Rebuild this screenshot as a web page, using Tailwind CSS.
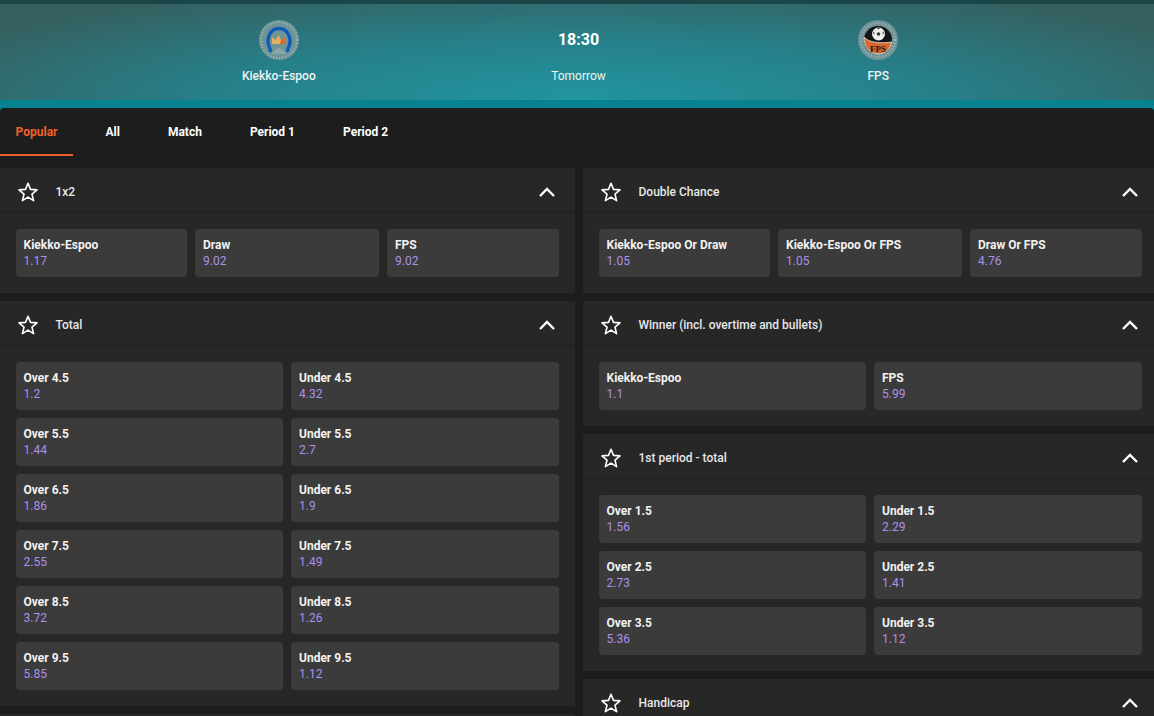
<!DOCTYPE html>
<html lang="en">
<head>
  <meta charset="UTF-8" />
  <title>Kiekko-Espoo - FPS</title>
  <script src="https://cdn.jsdelivr.net/npm/@tailwindcss/browser@4"></script>
</head>
<body class="m-0 h-[716px] w-[1154px] overflow-hidden bg-[#1d1d1d] font-['Roboto',sans-serif] text-white">

  <!-- Match header -->
  <header class="h-[116px] bg-[#06838f] pt-[4px] [background-image:linear-gradient(#1b4649_4px,transparent_4px)]">
    <div class="grid h-[96px] grid-cols-3 pr-[126px] pl-[129px] bg-[radial-gradient(ellipse_62%_125%_at_50%_100%,#21959f_0%,#26808a_50%,#35605f_100%)]">
      <div class="flex flex-col items-center">
        <svg class="mt-[16px] h-10 w-10" viewBox="0 0 40 40">
          <circle cx="20" cy="20" r="20" fill="#6f9497"/>
          <circle cx="20" cy="20" r="18" fill="none" stroke="#a3baba" stroke-width="2" stroke-dasharray="1 2"/>
          <path d="M20 27 L28 34 H12 Z" fill="#8aa6a8"/>
          <path d="M11 32 C12 30 11.5 29 10.5 27.5 C6.5 19 11 8.5 20 8.5 C29 8.5 33.5 19 29.5 27.5 C28.5 29 28 30 29 32" fill="none" stroke="#0f5cb8" stroke-width="3.4"/>
          <path d="M13 24 L13 17 L16.5 20 L19.5 15 L22 20 L26.5 17 L26 24 Z" fill="#e2b25c"/>
          <path d="M21 24 L22 20 L26.5 17 L26 24 Z" fill="#e0672a"/>
        </svg>
        <span class="mt-[7px] text-xs leading-[18px] font-medium text-[#eef4f4]">Kiekko-Espoo</span>
      </div>
      <div class="flex flex-col items-center">
        <span class="mt-[25px] text-base leading-[22px] font-bold">18:30</span>
        <span class="mt-[16px] text-xs leading-[18px] font-normal text-[#eef4f4]">Tomorrow</span>
      </div>
      <div class="flex flex-col items-center">
        <svg class="mt-[16px] h-10 w-10" viewBox="0 0 40 40">
          <circle cx="20" cy="20" r="20" fill="#6f9497"/>
          <circle cx="20" cy="20" r="17" fill="none" stroke="#a3baba" stroke-width="2" stroke-dasharray="1 2"/>
          <circle cx="20" cy="20" r="14" fill="#151515"/>
          <path d="M6.2 17 C10 22 20 24 33.7 22 C32.5 29 27 34 20 34 C12 34 5.5 26 6.2 17 Z" fill="#d9662a" stroke="#e8e8e8" stroke-width="0.8"/>
          <circle cx="20.5" cy="14" r="6.5" fill="#f0f0f0"/>
          <path d="M20.5 12 22.4 13.4 21.7 15.6 19.3 15.6 18.6 13.4 Z" fill="#333"/>
          <path d="M19 8 22 8 20.5 9.6 Z M14.8 13 16.2 11.2 16.4 14.8 Z M26.2 13 24.8 11.2 24.6 14.8 Z" fill="#333"/>
          <text x="20" y="31.5" font-size="9" font-weight="700" font-family="Liberation Serif, serif" text-anchor="middle" fill="#2a1a12">FPS</text>
        </svg>
        <span class="mt-[7px] text-xs leading-[18px] font-medium text-[#eef4f4]">FPS</span>
      </div>
    </div>
  </header>

  <div class="-mt-[8px] rounded-t-[4px] bg-[#1d1d1d]">
  <!-- Market tabs -->
  <nav class="flex h-[48px] text-xs font-bold">
    <a class="flex h-[48px] w-[73px] items-center justify-center border-b-2 border-[#f0602a] pt-[2px] text-[#f0602a]">Popular</a>
    <a class="ml-[32.5px] flex h-[48px] items-center">All</a>
    <a class="ml-[48px] flex h-[48px] items-center">Match</a>
    <a class="ml-[48px] flex h-[48px] items-center">Period 1</a>
    <a class="ml-[48px] flex h-[48px] items-center">Period 2</a>
  </nav>

  <main class="mt-[12px] grid w-[1158px] grid-cols-2 gap-2">
    <!-- Left column -->
    <div class="flex flex-col gap-2">
      <section class="bg-[#272727]">
        <div class="flex h-[45px] items-center border-b border-[#1e1e1e] pt-1 pr-[20px] pl-[18px]">
          <svg class="h-5 w-5" viewBox="0 0 20 20" fill="none" stroke="#fff" stroke-width="1.6" stroke-linejoin="round"><path d="M10 1.3 12.5 7.4 19 7.9 14 12.2 15.6 18.6 10 15.1 4.4 18.6 6 12.2 1 7.9 7.5 7.4Z"/></svg>
          <h3 class="ml-[17.5px] flex-1 text-xs font-medium text-[#e8e8e8]">1x2</h3>
          <svg class="h-4 w-4" viewBox="0 0 16 16" fill="none" stroke="#fff" stroke-width="2.4"><path d="M1 12 8 5 15 12"/></svg>
        </div>
        <div class="grid grid-cols-[171px_184px_172px] gap-2 p-4">
          <div class="h-[48px] rounded-sm bg-[#3b3b3b] px-[7.5px] py-2 text-xs leading-4"><p class="font-bold text-[#f2f2f2]">Kiekko-Espoo</p><p class="text-[#ab91ea]">1.17</p></div>
          <div class="h-[48px] rounded-sm bg-[#3b3b3b] px-2 py-2 text-xs leading-4"><p class="font-bold text-[#f2f2f2]">Draw</p><p class="text-[#ab91ea]">9.02</p></div>
          <div class="h-[48px] rounded-sm bg-[#3b3b3b] px-2 py-2 text-xs leading-4"><p class="font-bold text-[#f2f2f2]">FPS</p><p class="text-[#ab91ea]">9.02</p></div>
        </div>
      </section>

      <section class="bg-[#272727]">
        <div class="flex h-[45px] items-center border-b border-[#1e1e1e] pt-1 pr-[20px] pl-[18px]">
          <svg class="h-5 w-5" viewBox="0 0 20 20" fill="none" stroke="#fff" stroke-width="1.6" stroke-linejoin="round"><path d="M10 1.3 12.5 7.4 19 7.9 14 12.2 15.6 18.6 10 15.1 4.4 18.6 6 12.2 1 7.9 7.5 7.4Z"/></svg>
          <h3 class="ml-[17.5px] flex-1 text-xs font-medium text-[#e8e8e8]">Total</h3>
          <svg class="h-4 w-4" viewBox="0 0 16 16" fill="none" stroke="#fff" stroke-width="2.4"><path d="M1 12 8 5 15 12"/></svg>
        </div>
        <div class="grid grid-cols-[267px_268px] gap-2 p-4">
          <div class="h-[48px] rounded-sm bg-[#3b3b3b] px-[7.5px] py-2 text-xs leading-4"><p class="font-bold text-[#f2f2f2]">Over 4.5</p><p class="text-[#ab91ea]">1.2</p></div>
          <div class="h-[48px] rounded-sm bg-[#3b3b3b] px-2 py-2 text-xs leading-4"><p class="font-bold text-[#f2f2f2]">Under 4.5</p><p class="text-[#ab91ea]">4.32</p></div>
          <div class="h-[48px] rounded-sm bg-[#3b3b3b] px-[7.5px] py-2 text-xs leading-4"><p class="font-bold text-[#f2f2f2]">Over 5.5</p><p class="text-[#ab91ea]">1.44</p></div>
          <div class="h-[48px] rounded-sm bg-[#3b3b3b] px-2 py-2 text-xs leading-4"><p class="font-bold text-[#f2f2f2]">Under 5.5</p><p class="text-[#ab91ea]">2.7</p></div>
          <div class="h-[48px] rounded-sm bg-[#3b3b3b] px-[7.5px] py-2 text-xs leading-4"><p class="font-bold text-[#f2f2f2]">Over 6.5</p><p class="text-[#ab91ea]">1.86</p></div>
          <div class="h-[48px] rounded-sm bg-[#3b3b3b] px-2 py-2 text-xs leading-4"><p class="font-bold text-[#f2f2f2]">Under 6.5</p><p class="text-[#ab91ea]">1.9</p></div>
          <div class="h-[48px] rounded-sm bg-[#3b3b3b] px-[7.5px] py-2 text-xs leading-4"><p class="font-bold text-[#f2f2f2]">Over 7.5</p><p class="text-[#ab91ea]">2.55</p></div>
          <div class="h-[48px] rounded-sm bg-[#3b3b3b] px-2 py-2 text-xs leading-4"><p class="font-bold text-[#f2f2f2]">Under 7.5</p><p class="text-[#ab91ea]">1.49</p></div>
          <div class="h-[48px] rounded-sm bg-[#3b3b3b] px-[7.5px] py-2 text-xs leading-4"><p class="font-bold text-[#f2f2f2]">Over 8.5</p><p class="text-[#ab91ea]">3.72</p></div>
          <div class="h-[48px] rounded-sm bg-[#3b3b3b] px-2 py-2 text-xs leading-4"><p class="font-bold text-[#f2f2f2]">Under 8.5</p><p class="text-[#ab91ea]">1.26</p></div>
          <div class="h-[48px] rounded-sm bg-[#3b3b3b] px-[7.5px] py-2 text-xs leading-4"><p class="font-bold text-[#f2f2f2]">Over 9.5</p><p class="text-[#ab91ea]">5.85</p></div>
          <div class="h-[48px] rounded-sm bg-[#3b3b3b] px-2 py-2 text-xs leading-4"><p class="font-bold text-[#f2f2f2]">Under 9.5</p><p class="text-[#ab91ea]">1.12</p></div>
        </div>
      </section>

      <section class="h-[60px] bg-[#272727]"></section>
    </div>

    <!-- Right column -->
    <div class="flex flex-col gap-2">
      <section class="bg-[#272727]">
        <div class="flex h-[45px] items-center border-b border-[#1e1e1e] pt-1 pr-[20px] pl-[18px]">
          <svg class="h-5 w-5" viewBox="0 0 20 20" fill="none" stroke="#fff" stroke-width="1.6" stroke-linejoin="round"><path d="M10 1.3 12.5 7.4 19 7.9 14 12.2 15.6 18.6 10 15.1 4.4 18.6 6 12.2 1 7.9 7.5 7.4Z"/></svg>
          <h3 class="ml-[17.5px] flex-1 text-xs font-medium text-[#e8e8e8]">Double Chance</h3>
          <svg class="h-4 w-4" viewBox="0 0 16 16" fill="none" stroke="#fff" stroke-width="2.4"><path d="M1 12 8 5 15 12"/></svg>
        </div>
        <div class="grid grid-cols-[171px_184px_172px] gap-2 p-4">
          <div class="h-[48px] rounded-sm bg-[#3b3b3b] px-[7.5px] py-2 text-xs leading-4"><p class="font-bold text-[#f2f2f2]">Kiekko-Espoo Or Draw</p><p class="text-[#ab91ea]">1.05</p></div>
          <div class="h-[48px] rounded-sm bg-[#3b3b3b] px-2 py-2 text-xs leading-4"><p class="font-bold text-[#f2f2f2]">Kiekko-Espoo Or FPS</p><p class="text-[#ab91ea]">1.05</p></div>
          <div class="h-[48px] rounded-sm bg-[#3b3b3b] px-2 py-2 text-xs leading-4"><p class="font-bold text-[#f2f2f2]">Draw Or FPS</p><p class="text-[#ab91ea]">4.76</p></div>
        </div>
      </section>

      <section class="bg-[#272727]">
        <div class="flex h-[45px] items-center border-b border-[#1e1e1e] pt-1 pr-[20px] pl-[18px]">
          <svg class="h-5 w-5" viewBox="0 0 20 20" fill="none" stroke="#fff" stroke-width="1.6" stroke-linejoin="round"><path d="M10 1.3 12.5 7.4 19 7.9 14 12.2 15.6 18.6 10 15.1 4.4 18.6 6 12.2 1 7.9 7.5 7.4Z"/></svg>
          <h3 class="ml-[17.5px] flex-1 text-xs font-medium text-[#e8e8e8]">Winner (incl. overtime and bullets)</h3>
          <svg class="h-4 w-4" viewBox="0 0 16 16" fill="none" stroke="#fff" stroke-width="2.4"><path d="M1 12 8 5 15 12"/></svg>
        </div>
        <div class="grid grid-cols-[267px_268px] gap-2 p-4">
          <div class="h-[48px] rounded-sm bg-[#3b3b3b] px-[7.5px] py-2 text-xs leading-4"><p class="font-bold text-[#f2f2f2]">Kiekko-Espoo</p><p class="text-[#ab91ea]">1.1</p></div>
          <div class="h-[48px] rounded-sm bg-[#3b3b3b] px-2 py-2 text-xs leading-4"><p class="font-bold text-[#f2f2f2]">FPS</p><p class="text-[#ab91ea]">5.99</p></div>
        </div>
      </section>

      <section class="bg-[#272727]">
        <div class="flex h-[45px] items-center border-b border-[#1e1e1e] pt-1 pr-[20px] pl-[18px]">
          <svg class="h-5 w-5" viewBox="0 0 20 20" fill="none" stroke="#fff" stroke-width="1.6" stroke-linejoin="round"><path d="M10 1.3 12.5 7.4 19 7.9 14 12.2 15.6 18.6 10 15.1 4.4 18.6 6 12.2 1 7.9 7.5 7.4Z"/></svg>
          <h3 class="ml-[17.5px] flex-1 text-xs font-medium text-[#e8e8e8]">1st period - total</h3>
          <svg class="h-4 w-4" viewBox="0 0 16 16" fill="none" stroke="#fff" stroke-width="2.4"><path d="M1 12 8 5 15 12"/></svg>
        </div>
        <div class="grid grid-cols-[267px_268px] gap-2 p-4">
          <div class="h-[48px] rounded-sm bg-[#3b3b3b] px-[7.5px] py-2 text-xs leading-4"><p class="font-bold text-[#f2f2f2]">Over 1.5</p><p class="text-[#ab91ea]">1.56</p></div>
          <div class="h-[48px] rounded-sm bg-[#3b3b3b] px-2 py-2 text-xs leading-4"><p class="font-bold text-[#f2f2f2]">Under 1.5</p><p class="text-[#ab91ea]">2.29</p></div>
          <div class="h-[48px] rounded-sm bg-[#3b3b3b] px-[7.5px] py-2 text-xs leading-4"><p class="font-bold text-[#f2f2f2]">Over 2.5</p><p class="text-[#ab91ea]">2.73</p></div>
          <div class="h-[48px] rounded-sm bg-[#3b3b3b] px-2 py-2 text-xs leading-4"><p class="font-bold text-[#f2f2f2]">Under 2.5</p><p class="text-[#ab91ea]">1.41</p></div>
          <div class="h-[48px] rounded-sm bg-[#3b3b3b] px-[7.5px] py-2 text-xs leading-4"><p class="font-bold text-[#f2f2f2]">Over 3.5</p><p class="text-[#ab91ea]">5.36</p></div>
          <div class="h-[48px] rounded-sm bg-[#3b3b3b] px-2 py-2 text-xs leading-4"><p class="font-bold text-[#f2f2f2]">Under 3.5</p><p class="text-[#ab91ea]">1.12</p></div>
        </div>
      </section>

      <section class="bg-[#272727]">
        <div class="flex h-[45px] items-center border-b border-[#1e1e1e] pt-1 pr-[20px] pl-[18px]">
          <svg class="h-5 w-5" viewBox="0 0 20 20" fill="none" stroke="#fff" stroke-width="1.6" stroke-linejoin="round"><path d="M10 1.3 12.5 7.4 19 7.9 14 12.2 15.6 18.6 10 15.1 4.4 18.6 6 12.2 1 7.9 7.5 7.4Z"/></svg>
          <h3 class="ml-[17.5px] flex-1 text-xs font-medium text-[#e8e8e8]">Handicap</h3>
          <svg class="h-4 w-4" viewBox="0 0 16 16" fill="none" stroke="#fff" stroke-width="2.4"><path d="M1 12 8 5 15 12"/></svg>
        </div>
      </section>
    </div>
  </main>
  </div>

</body>
</html>
